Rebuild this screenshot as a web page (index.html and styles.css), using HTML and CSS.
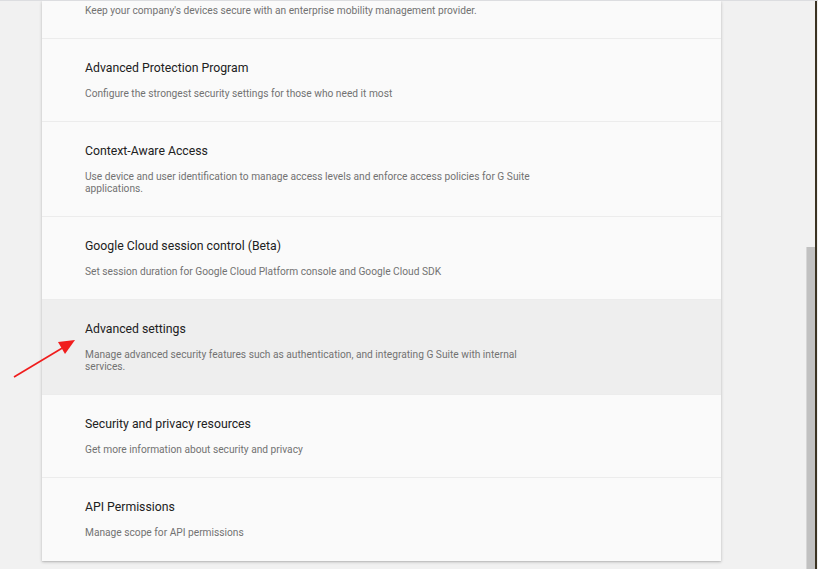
FILE: index.html
```html
<!DOCTYPE html>
<html>
<head>
<meta charset="utf-8">
<link rel="stylesheet" href="styles.css">
</head>
<body>
<div class="page">
  <div class="card">
    <div class="row partial">
      <div class="desc">Keep your company's devices secure with an enterprise mobility management provider.</div>
    </div>
    <div class="row">
      <div class="title">Advanced Protection Program</div>
      <div class="desc">Configure the strongest security settings for those who need it most</div>
    </div>
    <div class="row">
      <div class="title">Context-Aware Access</div>
      <div class="desc">Use device and user identification to manage access levels and enforce access policies for G Suite applications.</div>
    </div>
    <div class="row">
      <div class="title">Google Cloud session control (Beta)</div>
      <div class="desc">Set session duration for Google Cloud Platform console and Google Cloud SDK</div>
    </div>
    <div class="row active">
      <div class="title">Advanced settings</div>
      <div class="desc">Manage advanced security features such as authentication, and integrating G Suite with internal services.</div>
    </div>
    <div class="row">
      <div class="title">Security and privacy resources</div>
      <div class="desc">Get more information about security and privacy</div>
    </div>
    <div class="row last">
      <div class="title">API Permissions</div>
      <div class="desc">Manage scope for API permissions</div>
    </div>
  </div>
</div>
<svg class="arrow" width="70" height="46" viewBox="0 0 70 46">
  <line x1="2" y1="40" x2="52" y2="10" stroke="#f01c1c" stroke-width="1.6"/>
  <polygon points="63,3 46,5 53,17" fill="#f01c1c"/>
</svg>
<div class="scrollbar"><div class="thumb"></div></div>
<div class="edge"></div>
</body>
</html>
```
FILE: styles.css
```css
html, body {
  margin: 0;
  padding: 0;
  height: 100%;
  overflow: hidden;
}
body {
  background: #f1f1f1;
  font-family: Roboto, "Liberation Sans", Arial, sans-serif;
  border-top: 1px solid #dcdde0;
  box-sizing: border-box;
  position: relative;
}
.page {
  display: flex;
  padding-left: 42px;
}
.card {
  width: 679px;
  background: #fafafa;
  box-shadow: 0 1px 3px rgba(0,0,0,0.22), 0 1px 1px rgba(0,0,0,0.06);
}
.row {
  padding: 21px 43px 21px 43px;
  border-bottom: 1px solid #ececec;
}
.row.partial {
  padding-top: 4px;
}
.row.active {
  background: #eeeeee;
}
.row.last {
  border-bottom: none;
  padding-bottom: 22px;
}
.title {
  font-size: 12.25px;
  line-height: 16px;
  color: #212121;
  margin-bottom: 12px;
}
.desc {
  font-size: 10.2px;
  line-height: 12px;
  color: #727272;
  max-width: 470px;
}
.arrow {
  position: absolute;
  left: 12px;
  top: 336px;
}
.scrollbar {
  position: absolute;
  right: 3px;
  top: 0;
  bottom: 0;
  width: 9px;
}
.thumb {
  position: absolute;
  left: 0;
  right: 0;
  top: 246px;
  bottom: 0;
  background: #c1c1c1;
  border-left: 1px solid #d6d6d6;
}
.edge {
  position: absolute;
  right: 1px;
  top: 0;
  bottom: 0;
  width: 2px;
  background: #3b3322;
}
```
